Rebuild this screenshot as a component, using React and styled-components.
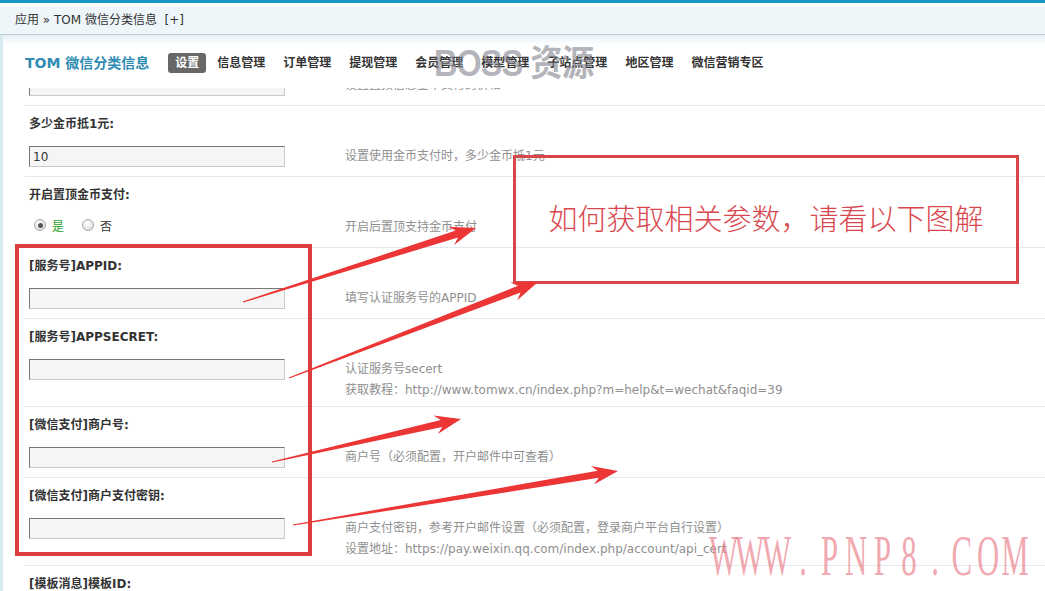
import styled, { createGlobalStyle } from "styled-components";

const GlobalStyle = createGlobalStyle`
  html, body {
    margin: 0;
    padding: 0;
    background: #fff;
  }
  body {
    font-family: "DejaVu Sans", "Noto Sans CJK SC", sans-serif;
    font-size: 12px;
    color: #333;
  }
`;

const tabs = ["设置", "信息管理", "订单管理", "提现管理", "会员管理", "模型管理", "子站点管理", "地区管理", "微信营销专区"];

const settings = [
  { label: "金币支付置顶单价:", value: "", tips: ["设置置顶信息金币支付的价格"] },
  { label: "多少金币抵1元:", value: "10", tips: ["设置使用金币支付时，多少金币抵1元"] },
  { label: "开启置顶金币支付:", radio: true, tips: ["开启后置顶支持金币支付"] },
  { label: "[服务号]APPID:", value: "", tips: ["填写认证服务号的APPID"] },
  {
    label: "[服务号]APPSECRET:",
    value: "",
    tips: ["认证服务号secert", "获取教程：http://www.tomwx.cn/index.php?m=help&t=wechat&faqid=39"],
  },
  { label: "[微信支付]商户号:", value: "", tips: ["商户号（必须配置，开户邮件中可查看）"] },
  {
    label: "[微信支付]商户支付密钥:",
    value: "",
    tips: [
      "商户支付密钥，参考开户邮件设置（必须配置，登录商户平台自行设置）",
      "设置地址：https://pay.weixin.qq.com/index.php/account/api_cert",
    ],
  },
  { label: "[模板消息]模板ID:", value: "", tips: ["模板消息ID"] },
];

// arrow shape: thin tail widening to a notched head
const arrowPoints = (x1, y1, x2, y2) => {
  const dx = x2 - x1;
  const dy = y2 - y1;
  const len = Math.hypot(dx, dy);
  const ux = dx / len;
  const uy = dy / len;
  const nx = -uy;
  const ny = ux;
  const head = 23;
  const bx = x2 - ux * head;
  const by = y2 - uy * head;
  const p = (x, y, k, m) => `${(x + nx * k + ux * m).toFixed(1)},${(y + ny * k + uy * m).toFixed(1)}`;
  return [
    p(x1, y1, 0.6, 0),
    p(bx, by, 3.6, 3),
    p(bx, by, 9.5, -3),
    `${x2},${y2}`,
    p(bx, by, -9.5, -3),
    p(bx, by, -3.6, 3),
    p(x1, y1, -0.6, 0),
  ].join(" ");
};

const arrows = [
  [243, 302, 476, 228],
  [289, 378, 538, 282],
  [272, 462, 461, 419],
  [293, 525, 618, 471],
];

export default function App() {
  return (
    <>
      <GlobalStyle />
      <Page>
        <TopBar />
        <Crumbs>
          应用 » TOM 微信分类信息 &nbsp;[+]
        </Crumbs>
        <Body>
          <Header>
            <Title>TOM 微信分类信息</Title>
            <Nav>
              {tabs.map((t, i) => (
                <Tab key={t} $active={i === 0}>
                  {t}
                </Tab>
              ))}
            </Nav>
          </Header>
          <Scroll>
            <List>
              {settings.map((s) => (
                <Row key={s.label}>
                  <Label>{s.label}</Label>
                  <FieldRow>
                    <FieldCell>
                      {s.radio ? (
                        <RadioGroup>
                          <RadioItem>
                            <RadioDot $checked />
                            <RadioText $green>是</RadioText>
                          </RadioItem>
                          <RadioItem>
                            <RadioDot />
                            <RadioText>否</RadioText>
                          </RadioItem>
                        </RadioGroup>
                      ) : (
                        <Input defaultValue={s.value} />
                      )}
                    </FieldCell>
                    <Tips>
                      {s.tips.map((t) => (
                        <div key={t}>{t}</div>
                      ))}
                    </Tips>
                  </FieldRow>
                </Row>
              ))}
            </List>
          </Scroll>
        </Body>

        <BossMark>BOSS 资源</BossMark>
        <FieldsFrame />
        <NoteFrame>如何获取相关参数，请看以下图解</NoteFrame>
        <ArrowLayer viewBox="0 0 1045 591">
          {arrows.map((a) => (
            <polygon key={a.join("-")} points={arrowPoints(...a)} fill="#ec3535" />
          ))}
        </ArrowLayer>
        <SiteMark>
          {"WWW.PNP8.COM".split("").map((c, i) => (
            <MarkChar key={i}>
              <span>{c}</span>
            </MarkChar>
          ))}
        </SiteMark>
      </Page>
    </>
  );
}

const Page = styled.div`
  position: relative;
  width: 1045px;
  height: 591px;
  overflow: hidden;
  display: flex;
  flex-direction: column;
  background: #fff;
`;

const TopBar = styled.div`
  height: 3px;
  background: #1b93c0;
  margin-bottom: 4px;
  flex: none;
`;

const Crumbs = styled.div`
  flex: none;
  height: 27px;
  line-height: 27px;
  padding-left: 15px;
  background: #eef6fa;
  border-bottom: 1px solid #c3cbcf;
  color: #333;
  font-size: 12px;
`;

const Body = styled.div`
  flex: 1;
  min-height: 0;
  display: flex;
  flex-direction: column;
  border-left: 3px solid #d8eaf4;
  padding-left: 22px;
  background: linear-gradient(#e4f0f7, #fff 10px);
`;

const Header = styled.div`
  flex: none;
  height: 53px;
  box-sizing: border-box;
  padding-top: 18px;
  display: flex;
  align-items: flex-start;
`;

const Title = styled.div`
  font-size: 14px;
  font-weight: bold;
  color: #2f8cb3;
  line-height: 20px;
  margin-right: 19px;
`;

const Nav = styled.div`
  display: flex;
  gap: 4px;
`;

const Tab = styled.span`
  padding: 0 7px;
  height: 20px;
  line-height: 20px;
  font-weight: bold;
  font-size: 12px;
  border-radius: 3px;
  color: ${(p) => (p.$active ? "#fff" : "#333")};
  background: ${(p) => (p.$active ? "#676767" : "transparent")};
`;

const Scroll = styled.div`
  flex: 1;
  min-height: 0;
  overflow: hidden;
`;

const List = styled.div`
  margin-top: -54px;
`;

const Row = styled.div`
  border-top: 1px solid #e3ebf0;
`;

const Label = styled.div`
  padding: 11px 0 7px 4px;
  line-height: 14px;
  font-weight: bold;
  color: #333;
`;

const FieldRow = styled.div`
  display: grid;
  grid-template-columns: 320px 1fr;
  align-items: start;
`;

const FieldCell = styled.div`
  padding: 8px 0 9px 4px;
`;

const Input = styled.input`
  display: block;
  box-sizing: border-box;
  width: 256px;
  height: 21px;
  margin: 0;
  padding: 0 3px;
  font: 12px "DejaVu Sans", sans-serif;
  color: #333;
  background: #f5f5f5;
  border: 1px solid #c9c9c9;
  border-top-color: #777;
  border-left-color: #777;
  outline: none;
`;

const Tips = styled.div`
  padding: 8px 0 5px;
  line-height: 21px;
  color: #8f8f8f;
`;

const RadioGroup = styled.div`
  display: flex;
  align-items: flex-start;
  height: 20px;
  padding-top: 1px;
`;

const RadioItem = styled.label`
  display: flex;
  align-items: center;
  height: 14px;
  gap: 6px;
  margin-left: 5px;
  margin-right: 13px;
`;

const RadioDot = styled.span`
  position: relative;
  width: 12px;
  height: 12px;
  box-sizing: border-box;
  border-radius: 50%;
  border: 1px solid #a9a9a9;
  background: radial-gradient(circle at 40% 35%, #fff, #d6d6d6);
  &::after {
    content: "";
    display: ${(p) => (p.$checked ? "block" : "none")};
    position: absolute;
    left: 2.5px;
    top: 2.5px;
    width: 5px;
    height: 5px;
    border-radius: 50%;
    background: #555;
  }
`;

const RadioText = styled.span`
  color: ${(p) => (p.$green ? "#2aa02a" : "#333")};
`;

const BossMark = styled.div`
  position: absolute;
  left: 434px;
  top: 44px;
  font: bold 36px/40px "Liberation Sans", "Noto Sans CJK SC", sans-serif;
  letter-spacing: -1px;
  color: rgba(130, 130, 142, 0.6);
  transform: scaleX(0.9);
  transform-origin: left center;
  white-space: nowrap;
  pointer-events: none;
`;

const FieldsFrame = styled.div`
  position: absolute;
  left: 15px;
  top: 244px;
  width: 297px;
  height: 312px;
  box-sizing: border-box;
  border: 4px solid #dc3e40;
  pointer-events: none;
`;

const NoteFrame = styled.div`
  position: absolute;
  left: 513px;
  top: 155px;
  width: 506px;
  height: 129px;
  box-sizing: border-box;
  border: 3px solid #d9464a;
  display: flex;
  align-items: center;
  justify-content: center;
  padding-bottom: 6px;
  font: 29px/32px "Noto Sans CJK SC", sans-serif;
  font-weight: 300;
  color: #d9474e;
  white-space: nowrap;
`;

const ArrowLayer = styled.svg`
  position: absolute;
  left: 0;
  top: 0;
  width: 1045px;
  height: 591px;
  pointer-events: none;
`;

const SiteMark = styled.div`
  position: absolute;
  left: 710px;
  top: 528px;
  display: flex;
  pointer-events: none;
`;

const MarkChar = styled.span`
  width: 26.5px;
  display: flex;
  justify-content: center;
  overflow: visible;
  span {
    display: inline-block;
    font: 56px/56px "Liberation Serif", serif;
    color: rgba(236, 130, 142, 0.7);
    transform: scaleX(0.55);
  }
`;
